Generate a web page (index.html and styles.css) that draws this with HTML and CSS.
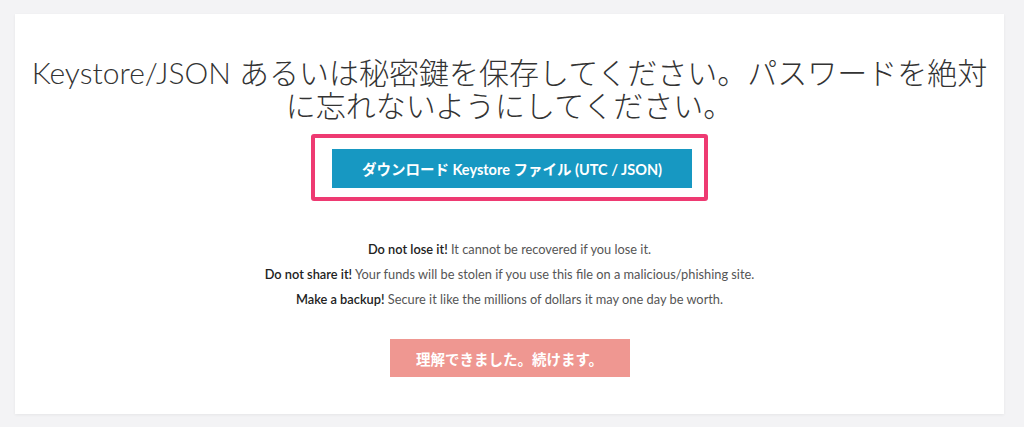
FILE: index.html
```html
<!DOCTYPE html>
<html lang="ja">
<head>
<meta charset="utf-8">
<link rel="stylesheet" href="styles.css">
</head>
<body>
<main class="card">
  <h1 class="title">Keystore/JSON あるいは秘密鍵を保存してください。パスワードを絶対に忘れないようにしてください。</h1>
  <div class="highlight">
    <button class="btn btn-download">ダウンロード Keystore ファイル (UTC / JSON)</button>
  </div>
  <div class="warnings">
    <p><strong>Do not lose it!</strong> It cannot be recovered if you lose it.</p>
    <p><strong>Do not share it!</strong> Your funds will be stolen if you use this file on a malicious/phishing site.</p>
    <p><strong>Make a backup!</strong> Secure it like the millions of dollars it may one day be worth.</p>
  </div>
  <button class="btn btn-continue">理解できました。続けます。</button>
</main>
</body>
</html>
```

FILE: styles.css
```css
* { box-sizing: border-box; }
html, body { margin: 0; height: 100%; }
body {
  background: #f3f3f5;
  font-family: Lato, "Noto Sans CJK JP", sans-serif;
  color: #333;
  padding: 14px 20px 13px 15px;
}
.card {
  background: #fff;
  height: 400px;
  box-shadow: 0 1px 3px rgba(0,0,0,0.06);
  display: flex;
  flex-direction: column;
  align-items: center;
  padding-top: 42px;
}
.title {
  margin: 0;
  width: 965px;
  font-size: 30px;
  font-weight: 300;
  line-height: 33px;
  text-align: center;
  color: #333;
}
.highlight {
  margin-top: 12px;
  border: 4px solid #ee3a72;
  border-radius: 3px;
  padding: 11px 12px 9px 17px;
}
.btn {
  border: none;
  color: #fff;
  font-family: Lato, "Noto Sans CJK JP", sans-serif;
  font-weight: 700;
  font-size: 14.5px;
  cursor: pointer;
}
.btn-download {
  width: 360px;
  height: 39px;
  background: #1798c2;
  display: block;
}
.warnings {
  margin-top: 36px;
  text-align: center;
  font-size: 12.8px;
  color: #555;
}
.warnings p { margin: 0; line-height: 25px; }
.warnings strong { color: #222; font-weight: 600; }
.btn-continue {
  margin-top: 27px;
  width: 240px;
  height: 38px;
  background: #ef9791;
}
```
